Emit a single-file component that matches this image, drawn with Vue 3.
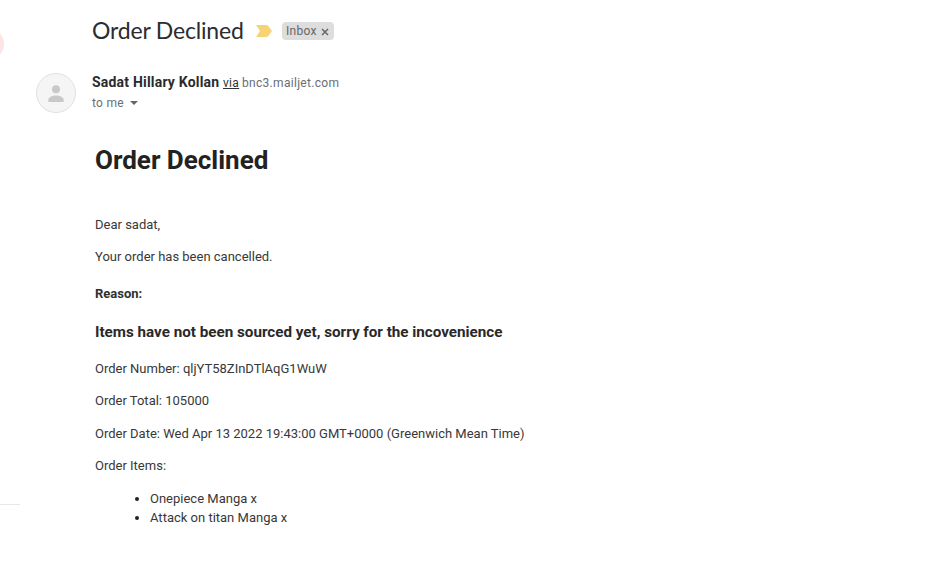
<script setup>
const details = [
  { text: 'Order Number: qljYT58ZInDTlAqG1WuW', name: 'number' },
  { text: 'Order Total: 105000', name: 'total' },
  { text: 'Order Date: Wed Apr 13 2022 19:43:00 GMT+0000 (Greenwich Mean Time)', name: 'date' },
  { text: 'Order Items:', name: 'items' },
]
const items = ['Onepiece Manga x', 'Attack on titan Manga x']
</script>

<template>
  <main class="mail">
    <span class="edge-dot"></span>
    <span class="edge-rule"></span>
    <header class="subject">
      <h2>Order Declined</h2>
      <svg class="marker" width="16" height="12" viewBox="0 0 16 12">
        <path d="M0 0H10.5Q11.5 0 12.1.8L16 6l-3.9 5.2Q11.5 12 10.5 12H0L4 6z" fill="#f8d373" />
      </svg>
      <span class="label">
        <span class="label-name">Inbox</span>
        <svg class="close" width="8" height="8" viewBox="0 0 8 8">
          <path d="M1 1l6 6M7 1L1 7" stroke="#666" stroke-width="1.5" />
        </svg>
      </span>
    </header>
    <section class="sender">
      <svg class="avatar" width="40" height="40" viewBox="0 0 40 40">
        <circle cx="20" cy="20" r="19.5" fill="#f5f5f5" stroke="#e0e0e0" />
        <circle cx="20" cy="16.3" r="4" fill="#c9c9c9" />
        <path d="M12.3 29v-2.3c0-2.7 4.6-4.2 7.7-4.2s7.7 1.5 7.7 4.2V29z" fill="#c9c9c9" />
      </svg>
      <div class="who">
        <div class="from">
          <strong>Sadat Hillary Kollan</strong>
          <span class="via">via</span>
          <span class="domain">bnc3.mailjet.com</span>
        </div>
        <div class="to">
          <span>to me</span>
          <svg width="8" height="4" viewBox="0 0 8 4"><path d="M0 0h8L4 4z" fill="#666" /></svg>
        </div>
      </div>
    </section>
    <article class="body">
      <h1>Order Declined</h1>
      <p>Dear sadat,</p>
      <p>Your order has been cancelled.</p>
      <h4>Reason:</h4>
      <h3>Items have not been sourced yet, sorry for the incovenience</h3>
      <p v-for="d in details" :key="d.name">{{ d.text }}</p>
      <ul>
        <li v-for="item in items" :key="item">{{ item }}</li>
      </ul>
    </article>
  </main>
</template>

<style>
body { background: #fff; }
</style>

<style scoped>
.mail {
  position: relative;
  box-sizing: border-box;
  height: 577px;
  padding-top: 16px;
  overflow: hidden;
  font-family: Roboto, "Liberation Sans", sans-serif;
  color: #222;
  background: #fff;
  white-space: nowrap;
}
.edge-dot {
  position: absolute;
  left: -28px;
  top: 28px;
  width: 32px;
  height: 32px;
  border-radius: 50%;
  background: #fde5e5;
}
.edge-rule {
  position: absolute;
  left: 0;
  top: 504px;
  width: 20px;
  height: 1px;
  background: #e8e8e8;
}
.subject {
  display: flex;
  align-items: center;
  height: 30px;
  padding-left: 92px;
}
.subject h2 {
  width: 164px;
  margin: 0 0 2px;
  font: 400 23px/28px Lato, sans-serif;
  letter-spacing: -0.18px;
  color: #2c2d30;
}
.label {
  display: flex;
  align-items: center;
  box-sizing: border-box;
  width: 52px;
  height: 18px;
  margin-left: 10px;
  padding-left: 4px;
  border-radius: 4px;
  background: #ddd;
  color: #666;
  font-size: 12px;
  letter-spacing: 0.3px;
}
.label-name { width: 35px; }
.close { margin-top: 1px; }
.sender {
  display: flex;
  gap: 16px;
  margin: 27px 0 0 36px;
}
.from {
  display: flex;
  align-items: baseline;
  height: 20px;
  line-height: 18px;
  font-size: 12px;
  color: #6a6e72;
  letter-spacing: 0.3px;
}
.from strong {
  width: 131px;
  font-size: 14px;
  font-weight: 700;
  letter-spacing: 0.2px;
  color: #2a2b2e;
}
.via {
  width: 19px;
  color: #333;
  text-decoration: underline;
}
.to {
  display: flex;
  align-items: center;
  gap: 6px;
  height: 20px;
  font-size: 12px;
  letter-spacing: 0.3px;
  color: #6a6e72;
}
.body {
  padding: 27.5px 0 0 95px;
  font-size: 13px;
  line-height: 19.5px;
}
.body h1 {
  margin: 0 0 35.3px;
  font-size: 26px;
  line-height: 39px;
}
.body p { margin: 13px 0; color: #383838; }
.body h4 {
  margin: 17.29px 0;
  font-size: 13px;
  color: #303030;
}
.body h3 {
  margin: 15.21px 0;
  font-size: 15.21px;
  line-height: 22.8px;
  color: #292929;
}
.body ul {
  margin: 13px 0;
  padding-left: 55px;
  color: #383838;
}
.body li::marker { color: #222; }
</style>
